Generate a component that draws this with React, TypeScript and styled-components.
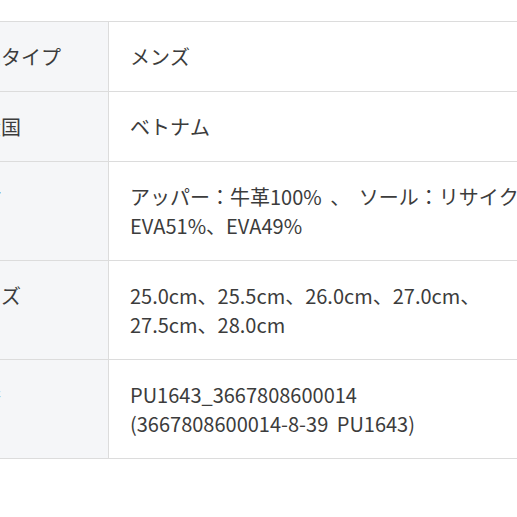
import React from "react";
import styled, { createGlobalStyle } from "styled-components";

const GlobalStyle = createGlobalStyle`
  html, body {
    margin: 0;
    padding: 0;
    background: #fff;
  }
  body {
    font-family: "Noto Sans CJK JP", "Noto Sans", sans-serif;
    color: #333;
  }
`;

const Page = styled.div`
  width: 517px;
  height: 517px;
  overflow: hidden;
  padding-top: 21px;
  box-sizing: border-box;
`;

const SpecTable = styled.table`
  margin-left: -60px;
  width: 640px;
  border-collapse: collapse;
  table-layout: fixed;
`;

const LabelCell = styled.th`
  width: 127px;
  padding: 20px;
  background-color: #f5f6f8;
  border: 1px solid #dcdcdc;
  font-size: 20px;
  line-height: 29px;
  font-weight: 400;
  text-align: left;
  vertical-align: top;
  color: #3c3c3c;
  font-kerning: none;
`;

const ValueCell = styled.td`
  padding: 20px 20px 20px 21px;
  border: 1px solid #dcdcdc;
  font-size: 20px;
  line-height: 29px;
  font-weight: 400;
  vertical-align: top;
  color: #3c3c3c;
  font-kerning: none;
  word-spacing: 4px;
`;

const rows = [
  { label: "商品タイプ", value: "メンズ" },
  { label: "原産国", value: "ベトナム" },
  { label: "素材", value: "アッパー：牛革100% 、 ソール：リサイクルEVA51%、EVA49%" },
  { label: "サイズ", value: "25.0cm、25.5cm、26.0cm、27.0cm、27.5cm、28.0cm" },
  { label: "品番", value: "PU1643_3667808600014\n(3667808600014-8-39 PU1643)" },
];

export default function App() {
  return (
    <>
      <GlobalStyle />
      <Page>
        <SpecTable>
          <tbody>
            {rows.map((r) => (
              <tr key={r.label}>
                <LabelCell>{r.label}</LabelCell>
                <ValueCell>
                  {r.value.split("\n").map((line, i) => (
                    <React.Fragment key={i}>
                      {i > 0 && <br />}
                      {line}
                    </React.Fragment>
                  ))}
                </ValueCell>
              </tr>
            ))}
          </tbody>
        </SpecTable>
      </Page>
    </>
  );
}
